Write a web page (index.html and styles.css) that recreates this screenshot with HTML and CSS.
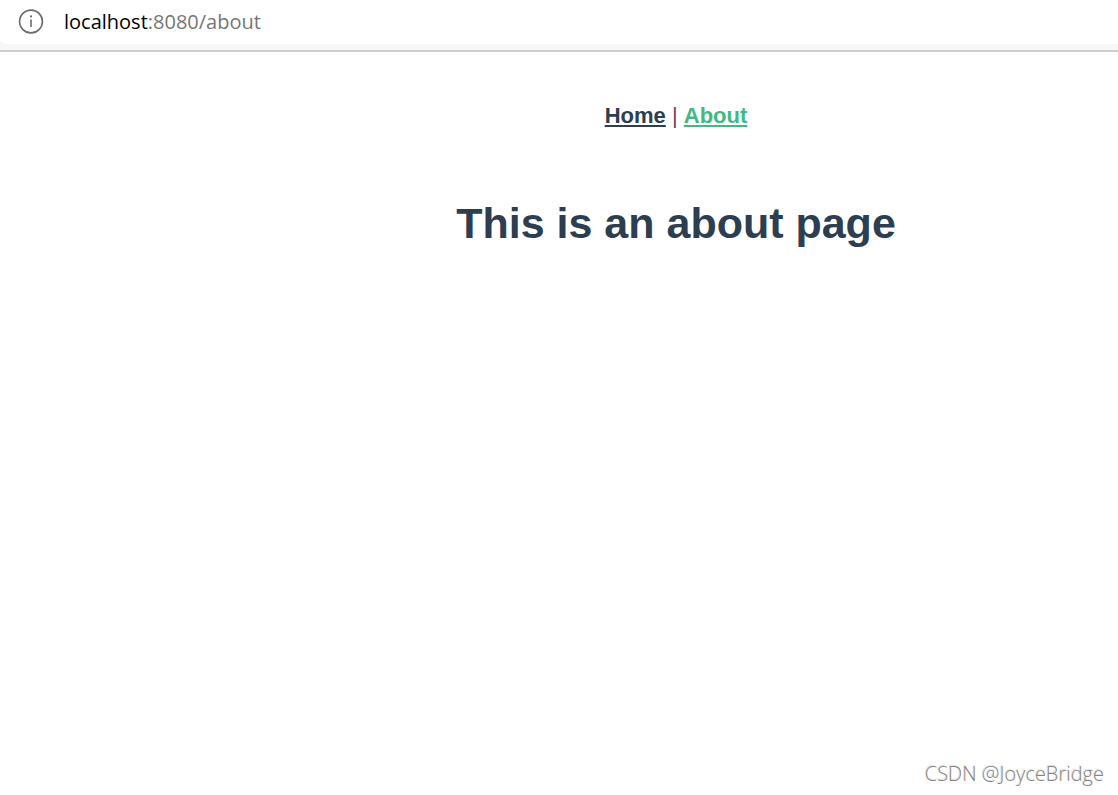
FILE: index.html
```html
<!DOCTYPE html>
<html lang="en">
<head>
<meta charset="utf-8">
<title>About</title>
<link rel="stylesheet" href="styles.css">
</head>
<body>
<header class="toolbar">
  <div class="address-bar">
    <button class="site-info" type="button" aria-label="View site information">
      <svg width="26" height="26" viewBox="0 0 26 26" fill="none" stroke="#6b6b6b">
        <circle cx="13" cy="12.5" r="11.4" stroke-width="1.6"/>
        <path d="M13 10.5V18" stroke-width="1.6"/>
        <circle cx="13" cy="7.4" r="1.1" fill="#6b6b6b" stroke="none"/>
      </svg>
    </button>
    <div class="url"><span class="host">localhost</span>:8080/about</div>
  </div>
</header>
<main class="app">
  <nav class="nav"><a class="link" href="#home">Home</a> <span class="divider">|</span> <a class="link link-active" href="#about" aria-current="page">About</a></nav>
  <h1 class="title">This is an about page</h1>
</main>
<footer class="watermark">CSDN @JoyceBridge</footer>
</body>
</html>
```

FILE: styles.css
```css
* {
  box-sizing: border-box;
}

body {
  margin: 0;
  min-height: 100vh;
  display: flex;
  flex-direction: column;
  background: #fff;
  color: #2c3e50;
  font-family: "Liberation Sans", Arial, sans-serif;
}

.toolbar {
  background: #f7f7f7;
  border-bottom: 2px solid #cecece;
  padding-bottom: 6px;
}

.address-bar {
  display: flex;
  align-items: center;
  gap: 20px;
  height: 44px;
  padding: 0 18px;
  background: #fff;
  border-bottom-left-radius: 6px;
}

.site-info {
  display: flex;
  padding: 0;
  border: 0;
  background: none;
}

.url {
  color: #767676;
  font-family: "Open Sans", sans-serif;
  font-size: 20px;
  line-height: 28px;
}

.host {
  color: #000;
}

.app {
  flex: 1;
  padding-left: 234px;
  text-align: center;
}

.nav {
  padding: 51px 0 43px;
  font-size: 22px;
  line-height: 26px;
}

.link {
  color: #2c3e50;
  font-weight: bold;
  text-decoration-thickness: 2px;
  text-underline-offset: 2px;
  text-decoration-skip-ink: none;
}

.link-active {
  color: #42b983;
}

.divider {
  color: #7c3f58;
}

.title {
  margin: 26px 0;
  font-size: 43px;
  line-height: 50px;
}

.watermark {
  padding: 0 14px 8px;
  color: #858585;
  font-family: "Open Sans", sans-serif;
  font-size: 20px;
  font-weight: 300;
  line-height: 26px;
  text-align: right;
  text-shadow: -1px -1px 0 #e4e4e4;
}
```
